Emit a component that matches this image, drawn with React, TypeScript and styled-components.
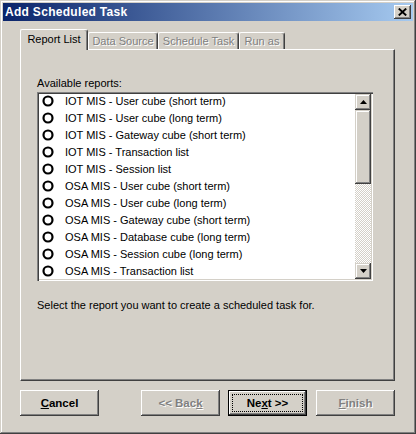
import React from 'react';
import styled, { createGlobalStyle, css } from 'styled-components';

const Global = createGlobalStyle`
  html, body { margin: 0; padding: 0; background: #D4D0C8; }
  body { font-family: "Liberation Sans", Arial, sans-serif; font-size: 11px; color: #000; }
`;

const Window = styled.div`
  width: 416px;
  height: 434px;
  box-sizing: border-box;
  padding: 3px;
  background: #D4D0C8;
  box-shadow: inset -1px -1px #404040, inset 1px 1px #D4D0C8, inset -2px -2px #808080, inset 2px 2px #fff;
  display: flex;
  flex-direction: column;
`;

const TitleBar = styled.div`
  height: 18px;
  flex: none;
  background: linear-gradient(to right, #0A246A, #A6CAF0);
  display: flex;
  align-items: center;
  padding: 0 2px 0 2px;
`;

const Title = styled.span`
  flex: 1;
  color: #fff;
  font-weight: bold;
  font-size: 12px;
  letter-spacing: 0.3px;
  white-space: nowrap;
`;

const CloseBtn = styled.div`
  width: 17px;
  height: 14px;
  box-sizing: border-box;
  background: #D4D0C8;
  box-shadow: inset -1px -1px #404040, inset 1px 1px #fff, inset -2px -2px #808080;
  display: flex;
  align-items: center;
  justify-content: center;
`;

const Body = styled.div`
  flex: 1;
  display: flex;
  flex-direction: column;
  padding: 8px 18px 0 17px;
  min-height: 0;
`;

const TabRow = styled.div`
  display: flex;
  align-items: flex-end;
  height: 20px;
  position: relative;
  z-index: 1;
`;

const Tab = styled.div<{ $active?: boolean; $w: number }>`
  width: ${p => p.$w}px;
  box-sizing: border-box;
  height: ${p => (p.$active ? 21 : 17)}px;
  margin-bottom: ${p => (p.$active ? -1 : 0)}px;
  background: #D4D0C8;
  border-top: 1px solid #fff;
  border-left: 1px solid #fff;
  border-right: 1px solid #404040;
  border-radius: 2px 3px 0 0;
  box-shadow: inset -1px 0 #808080;
  display: flex;
  justify-content: center;
  align-items: ${p => (p.$active ? 'flex-start' : 'center')};
  padding-top: ${p => (p.$active ? 3 : 0)}px;
  white-space: nowrap;
  ${p =>
    !p.$active &&
    css`
      color: #808080;
      text-shadow: 1px 1px #fff;
    `}
`;

const Panel = styled.div`
  flex: 1;
  box-sizing: border-box;
  border-top: 1px solid #fff;
  border-left: 1px solid #fff;
  border-right: 1px solid #404040;
  border-bottom: 1px solid #404040;
  box-shadow: inset -1px -1px #808080;
  padding: 27px 0 0 16px;
  display: flex;
  flex-direction: column;
`;

const Label = styled.div`
  line-height: 13px;
  height: 13px;
`;

const ListBox = styled.div`
  margin-top: 2px;
  width: 336px;
  height: 189px;
  box-sizing: border-box;
  background: #fff;
  box-shadow: inset 1px 1px #808080, inset 2px 2px #404040, inset -1px -1px #fff, inset -2px -2px #D4D0C8;
  padding: 2px;
  display: flex;
  overflow: hidden;
`;

const Items = styled.div`
  flex: 1;
  overflow: hidden;
`;

const ItemsInner = styled.div`
  margin-top: -2px;
`;

const Row = styled.div`
  height: 17px;
  display: flex;
  align-items: center;
  padding-left: 3px;
  gap: 11px;
  white-space: nowrap;
`;

const ScrollBar = styled.div`
  width: 16px;
  display: flex;
  flex-direction: column;
`;

const ScrollBtn = styled.div`
  width: 16px;
  height: 16px;
  flex: none;
  box-sizing: border-box;
  background: #D4D0C8;
  box-shadow: inset -1px -1px #404040, inset 1px 1px #D4D0C8, inset -2px -2px #808080, inset 2px 2px #fff;
  display: flex;
  align-items: center;
  justify-content: center;
`;

const Thumb = styled.div<{ $h: number }>`
  height: ${p => p.$h}px;
  flex: none;
  background: #D4D0C8;
  box-shadow: inset -1px -1px #404040, inset 1px 1px #D4D0C8, inset -2px -2px #808080, inset 2px 2px #fff;
`;

const Track = styled.div`
  flex: 1;
  background-color: #D4D0C8;
  background-image: repeating-conic-gradient(#fff 0 25%, #D4D0C8 0 50%);
  background-size: 2px 2px;
`;

const Hint = styled.div`
  margin-top: 18px;
  line-height: 13px;
`;

const ButtonRow = styled.div`
  display: flex;
  margin: 9px 0 15px;
  height: 26px;
`;

const Spacer = styled.div`
  flex: 1;
`;

const Button = styled.div<{ $disabled?: boolean; $default?: boolean; $ml?: number }>`
  width: 79px;
  height: 26px;
  box-sizing: border-box;
  margin-left: ${p => p.$ml ?? 0}px;
  background: #D4D0C8;
  font-weight: bold;
  font-size: 11.5px;
  display: flex;
  align-items: center;
  justify-content: center;
  box-shadow: inset -1px -1px #404040, inset 1px 1px #fff, inset -2px -2px #808080;
  ${p =>
    p.$disabled &&
    css`
      color: #808080;
      text-shadow: 1px 1px #fff;
    `}
  ${p =>
    p.$default &&
    css`
      border: 1px solid #000;
      position: relative;
    `}
`;

const Focus = styled.span`
  position: absolute;
  inset: 3px;
  border: 1px dotted #000;
`;

const Radio = () => (
  <svg width="12" height="12" viewBox="0 0 12 12">
    <circle cx="6" cy="6" r="4.5" fill="#fff" stroke="#000" strokeWidth="2.2" />
  </svg>
);

const UpArrow = () => (
  <svg width="7" height="4" viewBox="0 0 7 4">
    <path d="M3.5 0 L7 4 L0 4 Z" fill="#000" />
  </svg>
);

const DownArrow = () => (
  <svg width="7" height="4" viewBox="0 0 7 4">
    <path d="M0 0 L7 0 L3.5 4 Z" fill="#000" />
  </svg>
);

const CloseGlyph = () => (
  <svg width="9" height="8" viewBox="0 0 9 8">
    <path d="M0.8 0.6 L8.2 7.4 M8.2 0.6 L0.8 7.4" stroke="#000" strokeWidth="2" />
  </svg>
);

const reports = [
  'IOT MIS - User cube (short term)',
  'IOT MIS - User cube (long term)',
  'IOT MIS - Gateway cube (short term)',
  'IOT MIS - Transaction list',
  'IOT MIS - Session list',
  'OSA MIS - User cube (short term)',
  'OSA MIS - User cube (long term)',
  'OSA MIS - Gateway cube (short term)',
  'OSA MIS - Database cube (long term)',
  'OSA MIS - Session cube (long term)',
  'OSA MIS - Transaction list',
];

const tabs = [
  { label: 'Report List', w: 68, active: true },
  { label: 'Data Source', w: 70 },
  { label: 'Schedule Task', w: 81 },
  { label: 'Run as', w: 46 },
];

export default function App() {
  return (
    <>
      <Global />
      <Window>
        <TitleBar>
          <Title>Add Scheduled Task</Title>
          <CloseBtn>
            <CloseGlyph />
          </CloseBtn>
        </TitleBar>
        <Body>
          <TabRow>
            {tabs.map(t => (
              <Tab key={t.label} $w={t.w} $active={t.active}>
                {t.label}
              </Tab>
            ))}
          </TabRow>
          <Panel>
            <Label>Available reports:</Label>
            <ListBox>
              <Items>
                <ItemsInner>
                  {reports.map(r => (
                    <Row key={r}>
                      <Radio />
                      <span>{r}</span>
                    </Row>
                  ))}
                </ItemsInner>
              </Items>
              <ScrollBar>
                <ScrollBtn>
                  <UpArrow />
                </ScrollBtn>
                <Thumb $h={74} />
                <Track />
                <ScrollBtn>
                  <DownArrow />
                </ScrollBtn>
              </ScrollBar>
            </ListBox>
            <Hint>Select the report you want to create a scheduled task for.</Hint>
          </Panel>
          <ButtonRow>
            <Button>
              <span>
                <u>C</u>ancel
              </span>
            </Button>
            <Spacer />
            <Button $disabled>
              <span>
                &lt;&lt; Bac<u>k</u>
              </span>
            </Button>
            <Button $default $ml={8}>
              <Focus />
              <span>
                Ne<u>x</u>t &gt;&gt;
              </span>
            </Button>
            <Button $disabled $ml={9}>
              <span>
                <u>F</u>inish
              </span>
            </Button>
          </ButtonRow>
        </Body>
      </Window>
    </>
  );
}
